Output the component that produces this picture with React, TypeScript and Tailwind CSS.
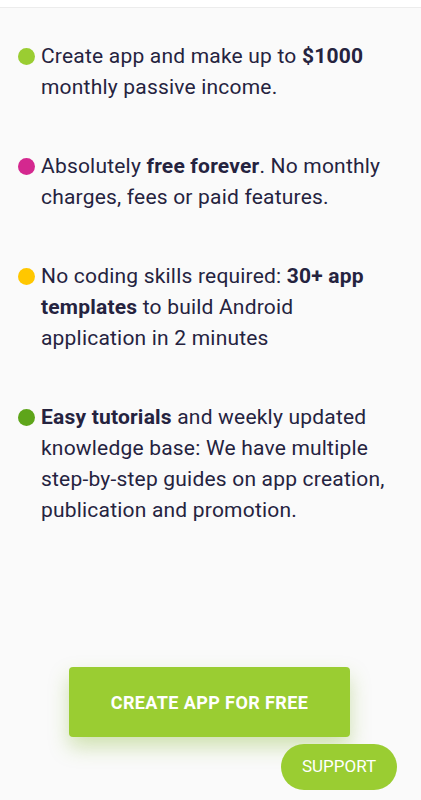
import React from 'react';

const items = [
  {
    color: 'bg-[#9acd32]',
    content: (
      <>
        Create app and make up to <b className="font-bold">$1000</b> monthly passive income.
      </>
    ),
  },
  {
    color: 'bg-[#d4288f]',
    content: (
      <>
        Absolutely <b className="font-bold">free forever</b>. No monthly charges, fees or paid features.
      </>
    ),
  },
  {
    color: 'bg-[#ffc700]',
    content: (
      <>
        No coding skills required: <b className="font-bold">30+ app templates</b> to build Android application in 2 minutes
      </>
    ),
  },
  {
    color: 'bg-[#5ea51a]',
    content: (
      <>
        <b className="font-bold">Easy tutorials</b> and weekly updated knowledge base: We have multiple step-by-step guides on app creation, publication and promotion.
      </>
    ),
  },
];

export default function App() {
  return (
    <div className="relative min-h-[800px] bg-[#fafafa] font-['Roboto',sans-serif] text-[#25233f]">
      {/* Header edge */}
      <div className="h-2 border-b border-[#ececec] bg-white" />

      {/* Feature list */}
      <ul className="flex flex-col gap-[48px] pt-[33px] pl-[18px] pr-[26px]">
        {items.map((item, i) => (
          <li key={i} className="flex items-start gap-[6px] text-[21px] leading-[31px] tracking-[0.2px]">
            <span className={`mt-[7px] h-[17px] w-[17px] shrink-0 rounded-full ${item.color}`} />
            <p>{item.content}</p>
          </li>
        ))}
      </ul>

      {/* Call to action */}
      <div className="flex justify-center pt-[141px]">
        <button className="ml-[-2px] h-[70px] w-[281px] rounded-[4px] bg-[#9acd32] text-[18px] font-bold uppercase tracking-[0.4px] text-white shadow-[0_10px_20px_rgba(130,180,40,0.35)]">
          Create app for free
        </button>
      </div>

      {/* Floating support button */}
      <button className="absolute top-[744px] left-[281px] h-[46px] w-[116px] rounded-full bg-[#9acd32] text-[17px] text-white">
        SUPPORT
      </button>
    </div>
  );
}
